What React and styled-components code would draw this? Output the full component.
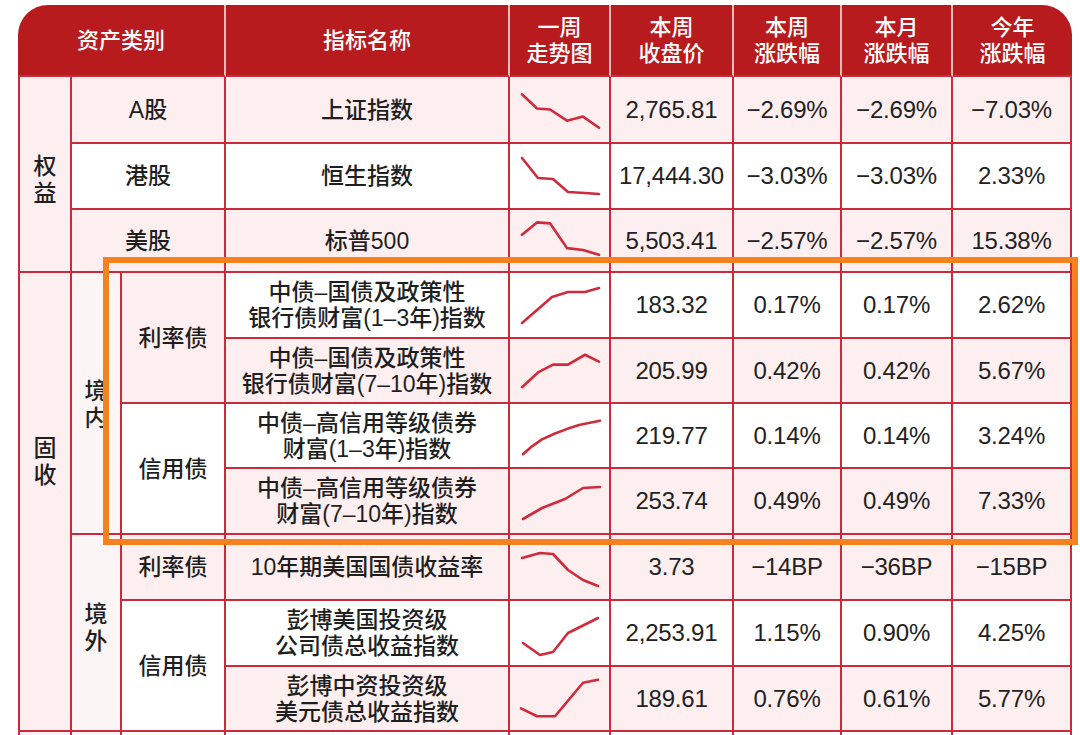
import React from 'react';
import styled, { createGlobalStyle } from 'styled-components';

const LINE = '#c92a3c';
const PINK = '#fdeef0';
const WHITE = '#ffffff';
const PALE = '#fbf5f5';

const GlobalStyle = createGlobalStyle`
  html, body {
    margin: 0;
    padding: 0;
    background: #fff;
  }
  body {
    font-family: "Liberation Sans", "Noto Sans CJK SC", sans-serif;
    color: #1f1f1f;
  }
`;

const Page = styled.div`
  position: relative;
  width: 1080px;
  height: 735px;
  padding: 5px 0 0 18px;
  box-sizing: border-box;
  overflow: hidden;
  background: #fff;
`;

const Grid = styled.div`
  display: grid;
  width: 1054px;
  grid-template-columns: 54px 50px 104px 284px 101px 123px 108px 111px 119px;
  grid-template-rows: 72px 67px 66px 63px 66px 65px 65px 66px 66px 66px 65px 40px;
  border-radius: 30px 30px 0 0;
  overflow: hidden;
`;

const HeadCell = styled.div`
  grid-column: ${(p) => p.$col};
  grid-row: 1;
  display: flex;
  align-items: center;
  justify-content: center;
  text-align: center;
  background: #b81b1d;
  color: #fff;
  font-size: 22px;
  font-weight: 500;
  line-height: 26px;
  padding-top: 2px;
  box-sizing: border-box;
  border-right: ${(p) => (p.$last ? 'none' : '2px solid rgba(255, 225, 225, 0.8)')};
  border-bottom: 2px solid ${LINE};
`;

const Cell = styled.div`
  grid-column: ${(p) => p.$col};
  grid-row: ${(p) => p.$row};
  position: relative;
  display: flex;
  align-items: center;
  justify-content: center;
  text-align: center;
  box-sizing: border-box;
  background: ${(p) => p.$bg};
  border-right: 2px solid ${LINE};
  border-bottom: 2px solid ${LINE};
  border-left: ${(p) => (p.$edge ? `2px solid ${LINE}` : 'none')};
  font-size: 23px;
  font-weight: 500;
  line-height: 26px;
  padding-top: ${(p) => p.$pt || 0}px;
  padding-bottom: ${(p) => p.$pb || 0}px;
`;

const Vertical = styled.span`
  width: 1em;
  line-height: 27px;
  word-break: break-all;
`;

const Name = styled.div`
  white-space: nowrap;
  line-height: 26px;
`;

const Num = styled.span`
  font-size: 24px;
  font-weight: 400;
  letter-spacing: -0.2px;
  color: #222;
`;

const Spark = styled.svg`
  position: absolute;
  inset: 0;
  width: 100%;
  height: 100%;
`;

const Highlight = styled.div`
  position: absolute;
  left: 103px;
  top: 257px;
  width: 975px;
  height: 288px;
  box-sizing: border-box;
  border: 6px solid #f5821f;
  pointer-events: none;
`;

const heads = [
  { col: '1 / 4', text: ['资产类别'] },
  { col: '4', text: ['指标名称'] },
  { col: '5', text: ['一周', '走势图'] },
  { col: '6', text: ['本周', '收盘价'] },
  { col: '7', text: ['本周', '涨跌幅'] },
  { col: '8', text: ['本月', '涨跌幅'] },
  { col: '9', text: ['今年', '涨跌幅'] },
];

const rows = [
  { name: ['上证指数'], v: ['2,765.81', '−2.69%', '−2.69%', '−7.03%'], bg: PINK, pts: [[12, 17], [27, 31], [40, 32], [57, 43], [73, 39], [89, 50]] },
  { name: ['恒生指数'], v: ['17,444.30', '−3.03%', '−3.03%', '2.33%'], bg: WHITE, pts: [[12, 14], [28, 34], [43, 35], [58, 48], [75, 49], [89, 50]] },
  { name: ['标普500'], v: ['5,503.41', '−2.57%', '−2.57%', '15.38%'], bg: PINK, pts: [[12, 26], [27, 13], [40, 14], [57, 40], [73, 42], [89, 47]] },
  { name: ['中债–国债及政策性', '银行债财富(1–3年)指数'], v: ['183.32', '0.17%', '0.17%', '2.62%'], bg: WHITE, pts: [[12, 50], [27, 37], [42, 24], [58, 19], [75, 19], [89, 15]] },
  { name: ['中债–国债及政策性', '银行债财富(7–10年)指数'], v: ['205.99', '0.42%', '0.42%', '5.67%'], bg: PINK, pts: [[12, 49], [28, 34], [43, 26], [58, 26], [75, 16], [89, 23]] },
  { name: ['中债–高信用等级债券', '财富(1–3年)指数'], v: ['219.77', '0.14%', '0.14%', '3.24%'], bg: WHITE, pts: [[13, 51], [22, 43], [32, 36], [45, 30], [58, 25], [70, 21], [90, 17]] },
  { name: ['中债–高信用等级债券', '财富(7–10年)指数'], v: ['253.74', '0.49%', '0.49%', '7.33%'], bg: PINK, pts: [[13, 50], [32, 39], [55, 30], [73, 19], [90, 18]] },
  { name: ['10年期美国国债收益率'], v: ['3.73', '−14BP', '−36BP', '−15BP'], bg: PINK, pts: [[12, 23], [30, 18], [43, 19], [58, 35], [73, 45], [88, 51]] },
  { name: ['彭博美国投资级', '公司债总收益指数'], v: ['2,253.91', '1.15%', '0.90%', '4.25%'], bg: WHITE, pts: [[13, 42], [30, 54], [43, 51], [58, 32], [88, 17]] },
  { name: ['彭博中资投资级', '美元债总收益指数'], v: ['189.61', '0.76%', '0.61%', '5.77%'], bg: PINK, pts: [[11, 42], [27, 50], [45, 50], [73, 16], [88, 13]] },
];

const groups = [
  { col: '1', row: '2 / 5', text: '权益', bg: PINK, vertical: true, edge: true, pt: 12 },
  { col: '2 / 4', row: '2', text: 'A股', bg: PINK },
  { col: '2 / 4', row: '3', text: '港股', bg: WHITE },
  { col: '2 / 4', row: '4', text: '美股', bg: PINK },
  { col: '1', row: '5 / 12', text: '固收', bg: PINK, vertical: true, edge: true, pb: 80 },
  { col: '2', row: '5 / 9', text: '境内', bg: PALE, vertical: true, pt: 4 },
  { col: '3', row: '5 / 7', text: '利率债', bg: PINK },
  { col: '3', row: '7 / 9', text: '信用债', bg: WHITE },
  { col: '2', row: '9 / 12', text: '境外', bg: PALE, vertical: true, pb: 10 },
  { col: '3', row: '9', text: '利率债', bg: PINK },
  { col: '3', row: '10 / 12', text: '信用债', bg: WHITE },
];

const Sparkline = ({ pts }) => (
  <Spark viewBox="0 0 99 64" preserveAspectRatio="none">
    <polyline
      points={pts.map((p) => p.join(',')).join(' ')}
      fill="none"
      stroke="#cf2b3d"
      strokeWidth="2.6"
      strokeLinejoin="round"
      strokeLinecap="round"
      vectorEffect="non-scaling-stroke"
    />
  </Spark>
);

const App = () => {
  return (
    <Page>
      <GlobalStyle />
      <Grid>
        {heads.map((h, i) => (
          <HeadCell key={h.col} $col={h.col} $last={i === heads.length - 1}>
            <div>
              {h.text.map((t) => (
                <div key={t}>{t}</div>
              ))}
            </div>
          </HeadCell>
        ))}

        {groups.map((g) => (
          <Cell key={g.col + g.row} $col={g.col} $row={g.row} $bg={g.bg} $edge={g.edge} $pt={g.pt} $pb={g.pb}>
            {g.vertical ? <Vertical>{g.text}</Vertical> : g.text}
          </Cell>
        ))}

        {rows.map((r, i) => {
          const row = String(i + 2);
          return (
            <React.Fragment key={row}>
              <Cell $col="4" $row={row} $bg={r.bg}>
                <div>
                  {r.name.map((n) => (
                    <Name key={n}>{n}</Name>
                  ))}
                </div>
              </Cell>
              <Cell $col="5" $row={row} $bg={r.bg}>
                <Sparkline pts={r.pts} />
              </Cell>
              {r.v.map((val, j) => (
                <Cell key={j} $col={String(6 + j)} $row={row} $bg={r.bg}>
                  <Num>{val}</Num>
                </Cell>
              ))}
            </React.Fragment>
          );
        })}

        <Cell $col="1" $row="12" $bg={PINK} $edge />
        <Cell $col="2" $row="12" $bg={PALE} />
        <Cell $col="3" $row="12" $bg={WHITE} />
        {[4, 5, 6, 7, 8, 9].map((c) => (
          <Cell key={c} $col={String(c)} $row="12" $bg={WHITE} />
        ))}
      </Grid>
      <Highlight />
    </Page>
  );
};

export default App;
